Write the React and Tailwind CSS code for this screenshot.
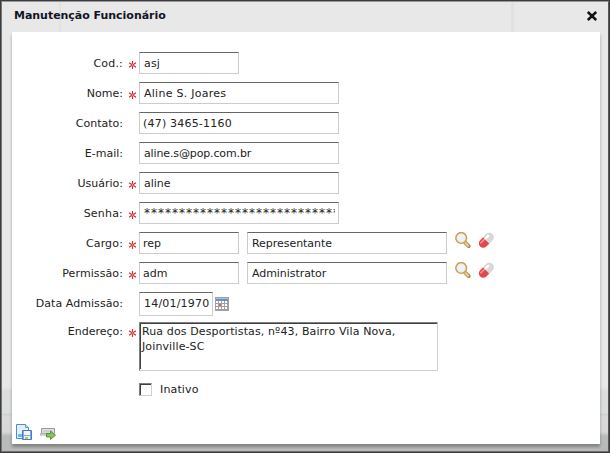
import React from 'react';

function Required() {
  return (
    <svg className="mt-[3px] h-[8px] w-[7px] shrink-0" viewBox="0 0 7 8" fill="none" stroke="#dc2830" strokeWidth="1.1">
      <path d="M3.5 0v8M0 1.8l7 4.4M7 1.8L0 6.2" />
      <circle cx="3.5" cy="4" r=".7" fill="#fff" stroke="#e8666a" strokeWidth=".6" />
    </svg>
  );
}

function Label({ text, required, drop = 'pt-[2px]', tracking = '' }) {
  return (
    <div className="flex w-[127px] shrink-0 items-center">
      <span className={`${drop} ${tracking} w-[111px] shrink-0 text-right whitespace-nowrap`}>{text}</span>
      <span className="ml-[6px] flex">{required && <Required />}</span>
    </div>
  );
}

function Field({ value, size = 'w-[200px]', pad = 'pl-[3px]', tracking = '' }) {
  return (
    <div className={`${size} ${pad} ${tracking} h-[22px] shrink-0 border border-[#cccccc] border-t-[#666666] bg-white leading-[22px] whitespace-nowrap`}>
      {value}
    </div>
  );
}

function Row({ label, required, tracking, children }) {
  return (
    <div className="mb-2 flex h-[22px] items-center">
      <Label text={label} required={required} tracking={tracking} />
      {children}
    </div>
  );
}

function SearchIcon() {
  return (
    <svg className="h-4 w-4" viewBox="0 0 16 16" fill="none">
      <path d="M10.4 10.8l3.3 3.3" stroke="#a88350" strokeWidth="3.8" strokeLinecap="round" />
      <path d="M9.8 10.2l3.4 3.5" stroke="#edcb88" strokeWidth="2.2" strokeLinecap="round" />
      <circle cx="6.2" cy="6" r="5.3" fill="#e8f3fd" stroke="#cf9a50" strokeWidth="1.6" />
      <circle cx="6.2" cy="6" r="4.3" stroke="#f3dfae" strokeWidth=".5" />
    </svg>
  );
}

function PillIcon() {
  return (
    <svg className="h-4 w-4" viewBox="0 0 16 16">
      <g transform="translate(-.8 .3) rotate(-45 8 8)">
        <path d="M8 3.6H3.8a4.4 4.4 0 000 8.8H8z" fill="#e4484d" />
        <path d="M8 3.8h4.2a4.2 4.2 0 010 8.4H8z" fill="#dadada" stroke="#bcbcbc" strokeWidth=".5" />
        <path d="M2.4 6h4.6" stroke="#f58a8c" strokeWidth="1.8" strokeLinecap="round" />
        <path d="M9 6.2h3.4" stroke="#fff" strokeWidth="2.4" strokeLinecap="round" />
      </g>
    </svg>
  );
}

function LookupRow({ label, code, name, tracking, nameTracking }) {
  return (
    <Row label={label} required tracking={tracking}>
      <Field value={code} size="w-[100px]" />
      <div className="ml-2 flex">
        <Field value={name} pad="pl-[4px]" tracking={nameTracking} />
      </div>
      <div className="mb-[6px] ml-2 flex gap-2">
        <SearchIcon />
        <PillIcon />
      </div>
    </Row>
  );
}

function CalendarIcon() {
  return (
    <svg className="h-[14px] w-[14px]" viewBox="0 0 14 14" shapeRendering="crispEdges">
      <path fill="#a0a0a4" d="M0 0h14v14H0z" />
      <path fill="#6d8fc4" d="M1 1h12v3H1z" />
      <path fill="#a9c0e0" d="M1 1h12v1H1z" />
      <path fill="#fff" d="M1 4h2v2H1zM4 4h2v2H4zM7 4h2v2H7zM10 4h2v2h-2zM1 7h2v2H1zM4 7h2v2H4zM7 7h2v2H7zM10 7h2v2h-2zM1 10h2v2H1zM4 10h2v2H4zM7 10h2v2H7zM10 10h2v2h-2z" />
      <path fill="#e76358" d="M4 7h2v2H4z" />
    </svg>
  );
}

function SaveIcon() {
  return (
    <svg className="h-4 w-4" viewBox="0 0 16 16">
      <path d="M.5.5h9l3 3v11H.5z" fill="#e3f1fc" stroke="#4a8ad6" />
      <path d="M9.5.5v3h3" fill="#b9dbf7" stroke="#4a8ad6" strokeWidth=".8" />
      <path d="M2 10h5v3H2z" fill="#66baf3" />
      <path d="M6.5 6.5h9v9h-9z" fill="#86a5df" stroke="#4d78c4" />
      <path d="M8 7h6v4H8z" fill="#f2f7ff" />
      <path d="M8 12h6v3H8z" fill="#f0f4dc" />
      <path d="M9 13h3v2H9z" fill="#a5d05a" />
    </svg>
  );
}

function ExportIcon() {
  return (
    <svg className="h-4 w-4" viewBox="0 0 16 16">
      <path d="M1.5 4.5h13v5h-13z" fill="#e2e2e2" stroke="#999" />
      <path d="M3 6h10v2.5H3z" fill="#cfcfcf" />
      <path d="M.5 9.5h14v1.6H.5z" fill="#ddd" stroke="#aaa" strokeWidth=".8" />
      <path d="M6.5 9.5h4V7l5 4.2-5 4.2V13h-4z" fill="#83c557" stroke="#4a9032" strokeWidth=".9" />
    </svg>
  );
}

function CloseIcon() {
  return (
    <svg className="h-[10px] w-[10px]" viewBox="0 0 10 10" stroke="#111" strokeWidth="2.5">
      <path d="M.8 1l8.4 8M9.2 1L.8 9" />
    </svg>
  );
}

export default function App() {
  return (
    <div className="h-[453px] w-[610px] overflow-hidden border border-[#3c3c3e] bg-[linear-gradient(to_bottom,#e8e8e8_0,#e8e8e8_386px,#dcdddd_390px,#dcdddd_412px,#d0d0d0_413px,#dadada_416px,#d8d8d8_431px,#b9bbba_435px,#b9bbba_100%)] font-['DejaVu_Sans','Liberation_Sans',sans-serif] text-[11px] text-[#222]">
      <div className="h-[451px] border border-r-[#58585a] border-t-[#98989a] border-b-[#6d6e70] border-l-[#777779] px-[10px]">
        <header className="flex h-[30px] items-start bg-[linear-gradient(to_right,transparent_47px,#e1e1e1_47px,#e1e1e1_49px,transparent_49px,transparent_499px,#e1e1e1_499px,#e1e1e1_502px,transparent_502px)] pt-[6px] pl-[2px]">
          <h1 className="font-bold leading-[15px] tracking-[-0.03px] text-[#101525]">Manutenção Funcionário</h1>
          <button className="mt-[3px] mr-px ml-auto" aria-label="Fechar"><CloseIcon /></button>
        </header>
        <main className="flex h-[412px] w-[588px] flex-col bg-white pt-[20px] shadow-[0_3px_3px_rgba(0,0,0,0.3)]">
          <Row label="Cod.:" required tracking="tracking-[0.2px]"><Field value="asj" pad="pl-[4px]" size="w-[100px]" tracking="tracking-[0.15px]" /></Row>
          <Row label="Nome:" required><Field value="Aline S. Joares" pad="pl-[4px]" tracking="tracking-[0.26px]" /></Row>
          <Row label="Contato:"><Field value="(47) 3465-1160" tracking="tracking-[0.2px]" /></Row>
          <Row label="E-mail:"><Field value="aline.s@pop.com.br" pad="pl-[4px]" tracking="tracking-[-0.13px]" /></Row>
          <Row label="Usuário:" required><Field value="aline" pad="pl-[4px]" /></Row>
          <Row label="Senha:" required tracking="tracking-[0.2px]">
            <div className="h-[22px] w-[200px] border border-[#cccccc] border-t-[#666666] pl-[4px]">
              <div className="h-[20px] w-[191px] overflow-hidden text-[12px] leading-[20px] tracking-[1px] whitespace-nowrap">****************************</div>
            </div>
          </Row>
          <LookupRow label="Cargo:" code="rep" name="Representante" tracking="tracking-[0.15px]" nameTracking="tracking-[-0.04px]" />
          <LookupRow label="Permissão:" code="adm" name="Administrator" tracking="tracking-[0.1px]" nameTracking="tracking-[-0.06px]" />
          <div className="mb-[6px] flex h-[24px] items-center">
            <Label text="Data Admissão:" drop="pt-0" tracking="tracking-[0.05px]" />
            <div className="h-[24px] w-[74px] border border-[#cccccc] border-t-[#666666] pl-[4px] leading-[22px] tracking-[0.2px] whitespace-nowrap">14/01/1970</div>
            <div className="ml-[2px]"><CalendarIcon /></div>
          </div>
          <div className="flex h-[49px] items-start">
            <div className="pt-px"><Label text="Endereço:" required drop="pt-px" /></div>
            <div className="h-[49px] w-[299px] border border-[#d4d0c8] border-t-[#808080] border-l-[#808080]">
              <div className="h-[46px] border-t border-l border-[#404040] pl-px leading-[15px]">
                <p className="tracking-[0.12px]">Rua dos Desportistas, nº43, Bairro Vila Nova,</p>
                <p className="tracking-[0.12px]">Joinville-SC</p>
              </div>
            </div>
          </div>
          <div className="mt-[12px] ml-[127px] flex h-[13px] items-center">
            <span className="h-[13px] w-[13px] border border-[#d4d0c8] border-t-[#808080] border-l-[#808080]">
              <span className="block h-[11px] w-[11px] border-t border-l border-[#404040]" />
            </span>
            <span className="ml-[8px] pt-[2px] tracking-[0.15px]">Inativo</span>
          </div>
          <footer className="mt-auto flex gap-2 pb-[4px] pl-[4px]">
            <SaveIcon />
            <ExportIcon />
          </footer>
        </main>
      </div>
    </div>
  );
}
